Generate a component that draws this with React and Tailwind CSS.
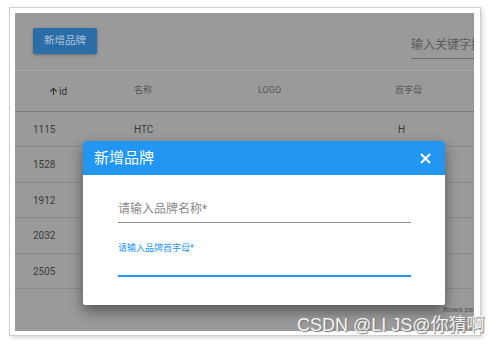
import React from 'react';

const rows = [
  { id: '1115', name: 'HTC', letter: 'H', h: 'h-[35px]' },
  { id: '1528', name: '', letter: '', h: 'h-[36px]' },
  { id: '1912', name: '', letter: '', h: 'h-[35px]' },
  { id: '2032', name: '', letter: '', h: 'h-[36px]' },
  { id: '2505', name: '', letter: '', h: 'h-[35px]' },
];

const font = { fontFamily: 'Roboto, "Noto Sans CJK SC", sans-serif' };

const App = () => {
  return (
    <div className="relative w-[502px] h-[344px] bg-white overflow-hidden" style={font}>
      <div className="pt-[7px] pl-[9px]">
        <div className="w-[472px] h-[329px] border border-[#cfcfcf] bg-white pt-[5px] pl-[5px] shadow-[2px_2px_4px_rgba(0,0,0,0.15)]">
          <div className="relative w-[459px] h-[318px] bg-[#9a9a9a] overflow-hidden">
            {/* toolbar */}
            <div className="h-[58px] flex justify-between items-start pl-[18px] pt-[15px] border-b border-[#a6a6a6]">
              <button className="w-[64px] h-[26px] rounded-[2px] bg-[#2b6ea7] text-[#aec3d8] text-[10.5px] shadow-[0_1px_3px_rgba(0,0,0,0.3)]">
                新增品牌
              </button>
              <div className="w-[63px] h-[31px] flex items-end pb-[4px] border-b border-[#6f6f6f] overflow-hidden whitespace-nowrap text-[12px] text-[#5a5a5a]">
                输入关键字搜索
              </div>
            </div>
            {/* header */}
            <div className="h-[41px] grid grid-cols-[101px_123px_138px_1fr] items-center pl-[18px] border-b border-[#7c7c7c] text-[9px] text-[#555]">
              <div className="pl-[16px] flex items-center gap-[1px] text-[10px] text-[#333]">
                <svg width="9" height="9" viewBox="0 0 10 10" fill="none" stroke="#333" strokeWidth="1.3">
                  <path d="M5 9V1.5M1.5 5L5 1.5L8.5 5" />
                </svg>
                id
              </div>
              <div>名称</div>
              <div className="pl-[1px]">LOGO</div>
              <div>首字母</div>
            </div>
            {/* rows */}
            {rows.map((r) => (
              <div key={r.id} className={`${r.h} grid grid-cols-[101px_123px_138px_1fr] items-center pl-[18px] border-b border-[#8a8a8a] text-[10px] text-[#3a3a3a]`}>
                <div>{r.id}</div>
                <div>{r.name}</div>
                <div></div>
                <div className="pl-[3px]">{r.letter}</div>
              </div>
            ))}
            <div className="pl-[428px] pt-[15px] whitespace-nowrap text-[8px] text-[#555]">Rows per page</div>

            {/* dialog */}
            <div className="absolute left-[68px] top-[128px] w-[362px] h-[164px] bg-white rounded-[2px] shadow-[0_6px_14px_rgba(0,0,0,0.45)] flex flex-col">
              <div className="h-[34px] bg-[#2196f3] rounded-t-[2px] flex items-center justify-between pl-[11px] pr-[14px]">
                <span className="text-[15px] text-white">新增品牌</span>
                <svg width="11" height="11" viewBox="0 0 11 11" stroke="white" strokeWidth="2">
                  <path d="M1 1L10 10M10 1L1 10" />
                </svg>
              </div>
              <div className="pl-[35px] pt-[27px]">
                <div className="w-[293px] h-[21px] border-b border-[#8c8c8c] text-[12px] text-[#8a8a8a] leading-[14px]">
                  请输入品牌名称*
                </div>
                <div className="w-[293px] mt-[20px] h-[34px] border-b-2 border-[#2196f3] text-[9px] text-[#2196f3] leading-[10px]">
                  请输入品牌首字母*
                </div>
              </div>
            </div>
          </div>
        </div>
      </div>
      <div
        className="absolute left-[297px] top-[314px] whitespace-nowrap text-[18px] text-[#f4f4f4] leading-[22px] [text-shadow:1px_1px_1px_#777]"
        style={{ fontFamily: '"Liberation Sans", "Noto Sans CJK SC", sans-serif' }}
      >
        CSDN @LI JS@你猜啊
      </div>
    </div>
  );
};

export default App;
